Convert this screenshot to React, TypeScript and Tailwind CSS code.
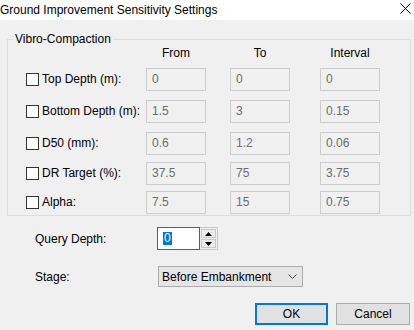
const rows = [
  { label: 'Top Depth (m):', from: '0', to: '0', step: '0', mt: 'mt-[7px]' },
  { label: 'Bottom Depth (m):', from: '1.5', to: '3', step: '0.15', mt: 'mt-[9px]' },
  { label: 'D50 (mm):', from: '0.6', to: '1.2', step: '0.06', mt: 'mt-[9px]' },
  { label: 'DR Target (%):', from: '37.5', to: '75', step: '3.75', mt: 'mt-[7px]' },
  { label: 'Alpha:', from: '7.5', to: '15', step: '0.75', mt: 'mt-[6px]' },
];

function Field({ value, className = '' }: { value: string; className?: string }) {
  return (
    <div
      className={`w-[60px] h-[23px] border border-[#cccccc] bg-[#f0f0f0] text-[#6d6d6d] flex items-center pl-[5px] pb-[2px] ${className}`}
    >
      {value}
    </div>
  );
}

export default function App() {
  return (
    <div className="w-[414px] h-[330px] overflow-hidden bg-[#f0f0f0] text-black text-[12px] leading-[16px] font-['Liberation_Sans',Arial,sans-serif] flex flex-col">
      {/* Title bar */}
      <div className="h-[20px] shrink-0 bg-white flex items-center justify-between pr-[3px]">
        <span className="-mt-[1px]">Ground Improvement Sensitivity Settings</span>
        <svg width="11" height="11" viewBox="0 0 11 11" className="-mt-[3px]">
          <path d="M0.5 0.5 L10.5 10.5 M10.5 0.5 L0.5 10.5" stroke="#000" strokeWidth="1" fill="none" />
        </svg>
      </div>

      {/* Group box */}
      <div className="relative mt-[19px] ml-[7px] w-[404px] h-[177px] shrink-0 border border-[#dcdcdc] pl-[18px] pt-[5px]">
        <span className="absolute -top-[9px] left-[5px] px-[2px] bg-[#f0f0f0]">Vibro-Compaction</span>

        <div className="flex h-[16px]">
          <div className="w-[120px]" />
          <div className="w-[60px] text-center">From</div>
          <div className="w-[60px] ml-[24px] text-center">To</div>
          <div className="w-[60px] ml-[30px] text-center">Interval</div>
        </div>

        {rows.map((r) => (
          <div key={r.label} className={`flex items-center ${r.mt}`}>
            <div className="w-[120px] flex items-center gap-[3px]">
              <span className="w-[13px] h-[13px] border border-[#333333] bg-white shrink-0" />
              <span className="pb-[1px]">{r.label}</span>
            </div>
            <Field value={r.from} />
            <Field value={r.to} className="ml-[24px]" />
            <Field value={r.step} className="ml-[30px]" />
          </div>
        ))}
      </div>

      {/* Query depth */}
      <div className="flex items-center mt-[11px] pl-[35px] h-[23px]">
        <div className="w-[122px]">Query Depth:</div>
        <div className="w-[43px] h-[23px] border border-[#0078d7] bg-white flex items-center pl-[5px]">
          <span className="bg-[#0078d7] text-white leading-[13px] h-[13px] px-[1px]">0</span>
        </div>
        <div className="w-[18px] h-[23px] flex flex-col gap-[1px] pt-[1px] pb-[1px] border border-[#c8c8c8] border-l-0 bg-[#f0f0f0]">
          <div className="flex-1 mx-[1px] border border-[#c8c8c8] bg-[#ececec] flex items-center justify-center">
            <svg width="7" height="4" viewBox="0 0 7 4">
              <path d="M3.5 0 L7 4 L0 4 Z" fill="#000" />
            </svg>
          </div>
          <div className="flex-1 mx-[1px] border border-[#c8c8c8] bg-[#ececec] flex items-center justify-center">
            <svg width="7" height="4" viewBox="0 0 7 4">
              <path d="M0 0 L7 0 L3.5 4 Z" fill="#000" />
            </svg>
          </div>
        </div>
      </div>

      {/* Stage */}
      <div className="flex items-center mt-[16px] pl-[35px] h-[21px]">
        <div className="w-[123px]">Stage:</div>
        <div className="w-[145px] h-[21px] border border-[#adadad] bg-[#e5e5e5] flex items-center justify-between pl-[3px] pr-[5px]">
          <span>Before Embankment</span>
          <svg width="9" height="5" viewBox="0 0 9 5">
            <path d="M0.5 0.5 L4.5 4.5 L8.5 0.5" stroke="#444" strokeWidth="1" fill="none" />
          </svg>
        </div>
      </div>

      {/* Buttons */}
      <div className="flex justify-end gap-[8px] pr-[4px] mt-[16px]">
        <button className="w-[73px] h-[22px] border-2 border-[#0078d7] bg-[#e1e1e1] flex items-center justify-center">
          OK
        </button>
        <button className="w-[74px] h-[22px] border border-[#adadad] bg-[#e1e1e1] flex items-center justify-center">
          Cancel
        </button>
      </div>
    </div>
  );
}
